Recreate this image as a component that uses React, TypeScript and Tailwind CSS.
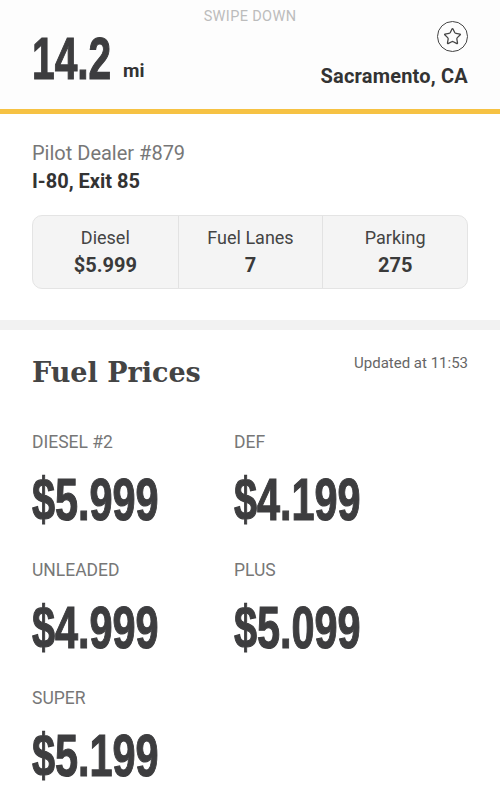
import { Star } from "lucide-react"

const prices = [
  { label: "DIESEL #2", value: "$5.999" },
  { label: "DEF", value: "$4.199" },
  { label: "UNLEADED", value: "$4.999" },
  { label: "PLUS", value: "$5.099" },
  { label: "SUPER", value: "$5.199" },
]

const stats = [
  { label: "Diesel", value: "$5.999" },
  { label: "Fuel Lanes", value: "7" },
  { label: "Parking", value: "275" },
]

function BigNumber({ children, className = "" }: { children: React.ReactNode; className?: string }) {
  return (
    <span
      className={
        "inline-block origin-left [transform:scaleX(0.69)] whitespace-nowrap font-['Liberation_Sans',sans-serif] font-bold text-[#3d3d3f] [-webkit-text-stroke:1.2px_#3d3d3f] " +
        className
      }
    >
      {children}
    </span>
  )
}

export default function App() {
  return (
    <div className="w-[500px] h-[800px] overflow-hidden bg-white font-['Roboto',sans-serif]">
      {/* header */}
      <div className="px-8 pt-[9px] pb-[22px] bg-[#fdfdfd]">
        <div className="text-center text-[14.5px] leading-4 tracking-wide text-[#bcbcbc]">SWIPE DOWN</div>
        <div className="mt-[6px] flex items-end justify-between">
          <div className="flex items-end">
            <BigNumber className="w-[80px] text-[59px] leading-[56px]">14.2</BigNumber>
            <span className="ml-[11px] mb-[2px] text-[19px] font-bold text-[#333]">mi</span>
          </div>
          <div className="flex flex-col items-end">
            <div className="-mt-[14px] mb-[12px] flex h-[31px] w-[31px] items-center justify-center rounded-full border-[1.5px] border-[#444]">
              <Star className="h-[19px] w-[19px] text-[#444]" strokeWidth={1.6} />
            </div>
            <span className="-mb-[1px] text-[20px] font-bold leading-6 tracking-[0.2px] text-[#333]">Sacramento, CA</span>
          </div>
        </div>
      </div>
      <div className="h-[5px] bg-[#f6c243]" />

      {/* station */}
      <div className="px-8 pt-[25px] pb-[31px]">
        <div className="text-[20px] leading-[28px] text-[#777]">Pilot Dealer #879</div>
        <div className="text-[20px] font-bold leading-[28px] text-[#333]">I-80, Exit 85</div>
        <div className="mt-[20px] grid grid-cols-3 rounded-[10px] border border-[#e4e4e4] bg-[#f4f4f4]">
          {stats.map((s, i) => (
            <div
              key={s.label}
              className={"flex flex-col items-center py-[9px] " + (i > 0 ? "border-l border-[#e2e2e2]" : "")}
            >
              <span className="text-[18px] leading-[26px] text-[#444]">{s.label}</span>
              <span className="text-[20px] font-bold leading-[28px] text-[#3a3a3a]">{s.value}</span>
            </div>
          ))}
        </div>
      </div>
      <div className="h-[10px] bg-[#f2f2f2]" />

      {/* fuel prices */}
      <div className="px-8 pt-[25px]">
        <div className="flex items-start justify-between">
          <h2 className="font-['DejaVu_Serif',serif] text-[27px] font-bold leading-9 text-[#444]">Fuel Prices</h2>
          <span className="-mt-[3px] text-[15px] text-[#666]">Updated at 11:53</span>
        </div>
        <div className="mt-[41px] grid grid-cols-[202px_1fr] gap-y-[28px]">
          {prices.map((p) => (
            <div key={p.label} className="flex flex-col">
              <span className="text-[17.5px] leading-5 text-[#777]">{p.label}</span>
              <BigNumber className="mt-[16px] text-[60px] leading-[64px]">{p.value}</BigNumber>
            </div>
          ))}
        </div>
      </div>
    </div>
  )
}
